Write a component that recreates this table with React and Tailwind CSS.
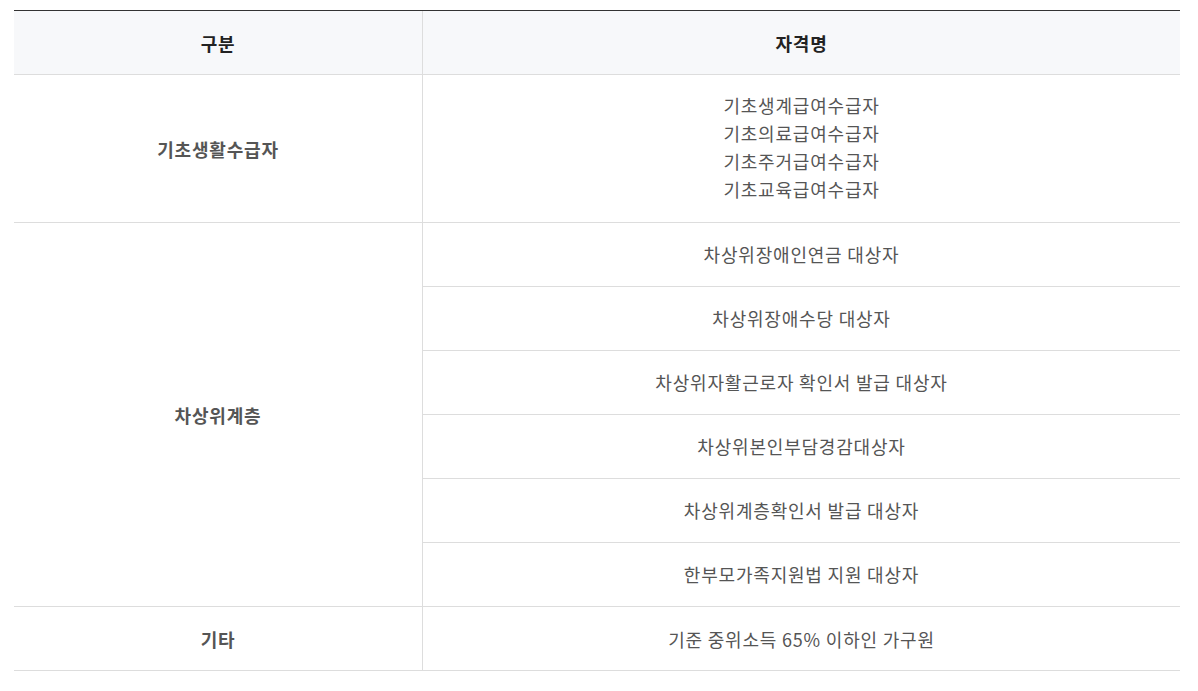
const basic = ["기초생계급여수급자", "기초의료급여수급자", "기초주거급여수급자", "기초교육급여수급자"];

const nearPoor = [
  "차상위장애인연금 대상자",
  "차상위장애수당 대상자",
  "차상위자활근로자 확인서 발급 대상자",
  "차상위본인부담경감대상자",
  "차상위계층확인서 발급 대상자",
  "한부모가족지원법 지원 대상자",
];

export default function App() {
  return (
    <div
      className="min-h-screen bg-white pt-[10px] px-[14px]"
      style={{ fontFamily: '"Noto Sans CJK KR", "Noto Sans", sans-serif' }}
    >
      <div className="w-[1166px] border-t border-[#333] text-[18px] tracking-[0.8px] leading-[28px] text-[#555]">
        {/* header */}
        <div className="flex h-[64px] bg-[#f7f8fa] border-b border-[#ddd] font-bold text-[#222]">
          <div className="w-[409px] border-r border-[#ddd] flex items-center justify-center">구분</div>
          <div className="flex-1 flex items-center justify-center">자격명</div>
        </div>

        {/* 기초생활수급자 */}
        <div className="flex border-b border-[#ddd]">
          <div className="w-[409px] border-r border-[#ddd] flex items-center justify-center font-bold">
            기초생활수급자
          </div>
          <div className="flex-1 flex flex-col items-center pt-[16px] pb-[19px]">
            {basic.map((t) => (
              <p key={t}>{t}</p>
            ))}
          </div>
        </div>

        {/* 차상위계층 */}
        <div className="flex border-b border-[#ddd]">
          <div className="w-[409px] border-r border-[#ddd] flex items-center justify-center font-bold">
            차상위계층
          </div>
          <div className="flex-1">
            {nearPoor.map((t, i) => (
              <div
                key={t}
                className={`flex items-center justify-center pb-px ${
                  i < nearPoor.length - 1 ? "h-[64px] border-b border-[#ddd]" : "h-[63px]"
                }`}
              >
                {t}
              </div>
            ))}
          </div>
        </div>

        {/* 기타 */}
        <div className="flex h-[64px] border-b border-[#ddd]">
          <div className="w-[409px] border-r border-[#ddd] flex items-center justify-center font-bold">기타</div>
          <div className="flex-1 flex items-center justify-center">기준 중위소득 65% 이하인 가구원</div>
        </div>
      </div>
    </div>
  );
}
